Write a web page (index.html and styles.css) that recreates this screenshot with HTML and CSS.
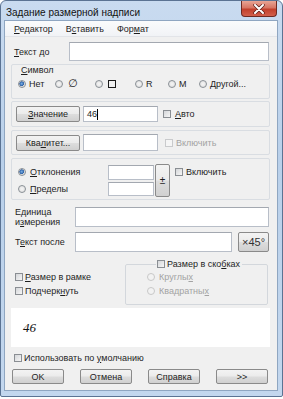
FILE: index.html
```html
<!DOCTYPE html>
<html lang="ru">
<head>
<meta charset="utf-8">
<title>Задание размерной надписи</title>
<link rel="stylesheet" href="styles.css">
</head>
<body>
<div class="window">
  <div class="titlebar">
    <span class="title">Задание размерной надписи</span>
    <div class="close">
      <svg width="12" height="10" viewBox="0 0 12 10"><path d="M2 1 L10 9 M10 1 L2 9" stroke="#5a1f1a" stroke-width="3.4" stroke-linecap="round"/><path d="M2 1 L10 9 M10 1 L2 9" stroke="#ffffff" stroke-width="2" stroke-linecap="round"/></svg>
    </div>
  </div>
  <div class="client">
    <div class="menubar">
      <span><u>Р</u>едактор</span>
      <span>В<u>с</u>тавить</span>
      <span>Фор<u>м</u>ат</span>
    </div>
    <div class="content">
      <div class="row row-before">
        <span class="lbl lbl-before"><u>Т</u>екст до</span>
        <div class="input input-before"></div>
      </div>

      <div class="frame frame-symbol">
        <div class="frame-title"><u>С</u>имвол</div>
        <div class="radios">
          <div class="opt"><span class="radio checked"></span><span>Нет</span></div>
          <div class="opt"><span class="radio"></span><span class="sym-diam">∅</span></div>
          <div class="opt"><span class="radio"></span><span class="sym-square"></span></div>
          <div class="opt"><span class="radio"></span><span>R</span></div>
          <div class="opt"><span class="radio"></span><span>M</span></div>
          <div class="opt"><span class="radio"></span><span>Другой...</span></div>
        </div>
      </div>

      <div class="frame frame-value">
        <div class="btn btn-side"><u>З</u>начение</div>
        <div class="input input-value"><span class="val">46</span><span class="caret"></span></div>
        <span class="check"></span>
        <span class="chk-lbl"><u>А</u>вто</span>
      </div>

      <div class="frame frame-qual">
        <div class="btn btn-side">Ква<u>л</u>итет...</div>
        <div class="input input-qual"></div>
        <span class="check disabled"></span>
        <span class="chk-lbl disabled-text">Включить</span>
      </div>

      <div class="frame frame-dev">
        <div class="dev-radios">
          <div class="opt dev-opt"><span class="radio checked"></span><span><u>О</u>тклонения</span></div>
          <div class="opt dev-opt"><span class="radio"></span><span><u>П</u>ределы</span></div>
        </div>
        <div class="dev-inputs">
          <div class="input input-dev1"></div>
          <div class="input input-dev2"></div>
        </div>
        <div class="btn btn-pm">±</div>
        <div class="dev-check">
          <span class="check"></span>
          <span class="chk-lbl">Включить</span>
        </div>
      </div>

      <div class="row row-unit">
        <span class="lbl lbl-unit">Единица<br>и<u>з</u>мерения</span>
        <div class="input input-unit"></div>
      </div>

      <div class="row row-after">
        <span class="lbl lbl-unit">Т<u>е</u>кст после</span>
        <div class="input input-after"></div>
        <div class="btn btn-45">×45°</div>
      </div>

      <div class="bottom">
        <div class="left-checks">
          <div class="chk-row"><span class="check"></span><span class="chk-lbl2"><u>Р</u>азмер в рамке</span></div>
          <div class="chk-row"><span class="check"></span><span class="chk-lbl2">Подчерк<u>н</u>уть</span></div>
        </div>
        <fieldset class="brackets">
          <legend class="brackets-legend"><span class="check"></span><span class="chk-lbl2">Размер в ско<u>б</u>ках</span></legend>
          <div class="opt br-opt"><span class="radio disabled"></span><span class="disabled-text">Круглы<u>х</u></span></div>
          <div class="opt br-opt"><span class="radio disabled"></span><span class="disabled-text">Квадратны<u>х</u></span></div>
        </fieldset>
      </div>

      <div class="preview"><span class="preview-text">46</span></div>

      <div class="default-row"><span class="check"></span><span class="chk-lbl2">Использовать по <u>у</u>молчанию</span></div>

      <div class="buttons">
        <div class="btn btn-main">OK</div>
        <div class="btn btn-main">Отмена</div>
        <div class="btn btn-main">Справка</div>
        <div class="btn btn-main">&gt;&gt;</div>
      </div>
    </div>
  </div>
</div>
</body>
</html>
```

FILE: styles.css
```css
* { box-sizing: border-box; }

html, body {
  margin: 0;
  padding: 0;
}

body {
  width: 283px;
  height: 399px;
  overflow: hidden;
  background: #ffffff;
  font-family: "Liberation Sans", Arial, sans-serif;
  font-size: 9px;
  color: #1e1e1e;
}

u { text-decoration: underline; text-underline-offset: 1px; }

.window {
  width: 283px;
  height: 397px;
  border: 1px solid #5b7393;
  border-radius: 6px 6px 2px 2px;
  background: linear-gradient(180deg, #c9dbf0 0%, #b9d0ea 40%, #c3d7ee 100%);
  display: flex;
  flex-direction: column;
}

.titlebar {
  height: 20px;
  display: flex;
  align-items: flex-start;
  padding-left: 5px;
}

.title {
  font-size: 10px;
  line-height: 10px;
  margin-top: 7px;
  color: #111;
}

.close {
  margin-left: auto;
  margin-right: 5px;
  width: 36px;
  height: 16px;
  border: 1px solid #6e2a22;
  border-top: none;
  border-radius: 0 0 4px 4px;
  background: linear-gradient(180deg, #e8a595 0%, #d77563 45%, #c2402c 55%, #d2604c 100%);
  display: flex;
  align-items: center;
  justify-content: center;
}

.client {
  flex: 1;
  margin: 0 5px 6px 4px;
  background: #f0f0f0;
  box-shadow: 0 0 0 1px #8fa6c1;
  display: flex;
  flex-direction: column;
}

.menubar {
  height: 16px;
  display: flex;
  gap: 13px;
  align-items: center;
  padding-left: 9px;
  background: linear-gradient(180deg, #fafbfc 0%, #f1f3f6 100%);
  border-bottom: 1px solid #e2e4e8;
}

.content {
  flex: 1;
  padding: 0 7px 0 6px;
  display: flex;
  flex-direction: column;
}

.row {
  display: flex;
  align-items: center;
}

.lbl { flex: none; }

.row-before {
  margin-top: 5px;
  height: 19px;
}

.lbl-before {
  width: 58px;
  padding-left: 3px;
}

.input {
  background: #ffffff;
  border: 1px solid #b8bec8;
  border-top-color: #a3a8b0;
}

.input-before { width: 200px; height: 19px; }

.frame {
  border: 1px solid #d9dde2;
  border-radius: 2px;
}

.frame-symbol {
  margin-top: 3px;
  height: 35px;
  padding-left: 6px;
}

.frame-title {
  margin-left: 3px;
  line-height: 10px;
  height: 10px;
}

.radios {
  margin-top: 3px;
  height: 12px;
  display: grid;
  grid-template-columns: 37px 40px 40px 33px 31px auto;
}

.opt {
  display: flex;
  align-items: center;
  gap: 3px;
  line-height: 12px;
}

.radio {
  flex: none;
  width: 8px;
  height: 8px;
  border-radius: 50%;
  border: 1px solid #8a9096;
  background: radial-gradient(circle at 50% 50%, #f6f6f6 0%, #dcdcdc 100%);
}

.radio.checked {
  background: radial-gradient(circle at 45% 45%, #7fb2e6 0%, #2d62a8 45%, #dcdcdc 55%, #f0f0f0 100%);
}

.radio.disabled {
  border-color: #c8c8c8;
  background: #f2f2f2;
}

.sym-diam {
  font-family: "DejaVu Sans", sans-serif;
  font-size: 11px;
  font-style: italic;
  margin-left: 2px;
  line-height: 12px;
}

.sym-square {
  width: 8px;
  height: 8px;
  border: 1.5px solid #1a1a1a;
  margin-left: 2px;
}

.frame-value {
  margin-top: 2px;
  height: 26px;
  display: flex;
  align-items: center;
  padding-left: 4px;
}

.btn {
  flex: none;
  display: flex;
  align-items: center;
  justify-content: center;
  border: 1px solid #8a8a8a;
  border-radius: 2px;
  background: linear-gradient(180deg, #f3f3f3 0%, #ebebeb 48%, #dddddd 52%, #d0d0d0 100%);
  color: #1e1e1e;
  white-space: nowrap;
}

.btn-side {
  width: 64px;
  height: 16px;
}

.input-value {
  margin-left: 3px;
  width: 75px;
  height: 16px;
  display: flex;
  align-items: center;
  padding-left: 3px;
}

.caret {
  width: 1px;
  height: 11px;
  background: #000;
}

.check {
  flex: none;
  width: 8px;
  height: 8px;
  border: 1px solid #8a8e93;
  background: linear-gradient(135deg, #d4d6d9 0%, #f6f6f6 100%);
}

.check.disabled {
  border-color: #c9cacc;
  background: #f5f5f5;
}

.frame-value .check { margin-left: 5px; }
.frame-qual .check { margin-left: 7px; }

.chk-lbl { margin-left: 4px; }
.frame-qual .chk-lbl { margin-left: 3px; }

.disabled-text { color: #a3a3a3; }

.frame-qual {
  margin-top: 3px;
  height: 25px;
  display: flex;
  align-items: center;
  padding-left: 4px;
}

.input-qual {
  margin-left: 3px;
  width: 75px;
  height: 17px;
}

.frame-dev {
  margin-top: 3px;
  height: 42px;
  display: flex;
  align-items: flex-start;
  padding: 5px 0 0 6px;
}

.dev-radios {
  width: 90px;
  display: flex;
  flex-direction: column;
  gap: 1px;
}

.dev-opt {
  height: 16px;
  gap: 4px;
}

.dev-inputs {
  display: flex;
  flex-direction: column;
  gap: 2px;
  margin-top: 1px;
}

.input-dev1 { width: 46px; height: 15px; }
.input-dev2 { width: 46px; height: 14px; }

.btn-pm {
  width: 15px;
  height: 33px;
  margin-left: 1px;
  font-size: 10px;
}

.dev-check {
  display: flex;
  align-items: center;
  height: 16px;
  margin-left: 5px;
}

.dev-check .chk-lbl { margin-left: 3px; }

.row-unit {
  margin-top: 7px;
  height: 20px;
}

.lbl-unit {
  width: 64px;
  padding-left: 4px;
  line-height: 10px;
}

.input-unit { width: 194px; height: 20px; }

.row-after {
  margin-top: 5px;
  height: 20px;
}

.input-after { width: 157px; height: 20px; }

.btn-45 {
  margin-left: 6px;
  width: 31px;
  height: 20px;
  font-size: 11px;
  color: #333;
}

.bottom {
  margin-top: 6px;
  height: 47px;
  display: flex;
}

.left-checks {
  padding: 12px 0 0 4px;
  display: flex;
  flex-direction: column;
}

.chk-row {
  height: 14px;
  display: flex;
  align-items: center;
}

.chk-lbl2 { margin-left: 2px; }

.brackets {
  margin: 0 2px 0 auto;
  width: 143px;
  height: 47px;
  padding: 0 0 0 21px;
  border: 1px solid #d3d7dc;
  border-radius: 2px;
  min-width: 0;
}

.brackets-legend {
  margin-left: 9px;
  padding: 0 2px 0 1px;
  height: 12px;
  display: flex;
  align-items: center;
}

.br-opt {
  height: 14px;
  gap: 4px;
}

.preview {
  margin-top: 3px;
  height: 39px;
  background: #ffffff;
  display: flex;
  align-items: center;
  padding-left: 12px;
}

.preview-text {
  font-family: "Liberation Serif", "Times New Roman", serif;
  font-style: italic;
  font-size: 13px;
  color: #111;
}

.default-row {
  margin-top: 6px;
  height: 10px;
  display: flex;
  align-items: center;
  padding-left: 3px;
}

.buttons {
  margin-top: 6px;
  height: 15px;
  display: flex;
  justify-content: space-between;
  padding: 0 2px 0 1px;
}

.btn-main {
  width: 52px;
  height: 15px;
}
```
